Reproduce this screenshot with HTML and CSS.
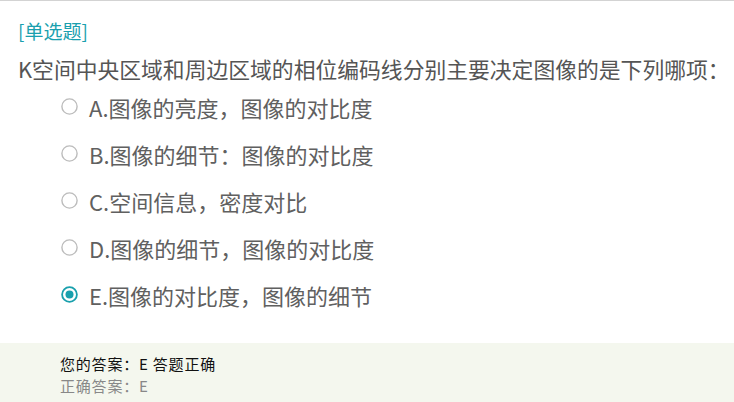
FILE: index.html
```html
<!DOCTYPE html>
<html lang="zh-CN">
<head>
<meta charset="utf-8">
<title>单选题</title>
<link rel="stylesheet" href="styles.css">
</head>
<body>
<div class="page">
  <div class="question">
    <div class="type">[单选题]</div>
    <div class="stem">K空间中央区域和周边区域的相位编码线分别主要决定图像的是下列哪项：</div>
    <ul class="options">
      <li class="option"><svg class="radio" viewBox="0 0 17 17" width="17" height="17"><circle cx="8.5" cy="8.5" r="7.6" fill="#fff" stroke="#bcbcbc" stroke-width="1.4"/></svg><span class="text">A.图像的亮度，图像的对比度</span></li>
      <li class="option"><svg class="radio" viewBox="0 0 17 17" width="17" height="17"><circle cx="8.5" cy="8.5" r="7.6" fill="#fff" stroke="#bcbcbc" stroke-width="1.4"/></svg><span class="text">B.图像的细节：图像的对比度</span></li>
      <li class="option"><svg class="radio" viewBox="0 0 17 17" width="17" height="17"><circle cx="8.5" cy="8.5" r="7.6" fill="#fff" stroke="#bcbcbc" stroke-width="1.4"/></svg><span class="text">C.空间信息，密度对比</span></li>
      <li class="option"><svg class="radio" viewBox="0 0 17 17" width="17" height="17"><circle cx="8.5" cy="8.5" r="7.6" fill="#fff" stroke="#bcbcbc" stroke-width="1.4"/></svg><span class="text">D.图像的细节，图像的对比度</span></li>
      <li class="option"><svg class="radio" viewBox="0 0 17 17" width="17" height="17"><circle cx="8.5" cy="8.5" r="7.4" fill="#fff" stroke="#19a0ad" stroke-width="1.8"/><circle cx="8.5" cy="8.5" r="4" fill="#19a0ad"/></svg><span class="text">E.图像的对比度，图像的细节</span></li>
    </ul>
  </div>
  <div class="answer">
    <div class="mine">您的答案：E 答题正确</div>
    <div class="right">正确答案：E</div>
  </div>
</div>
</body>
</html>
```
FILE: styles.css
```css
html, body {
  margin: 0;
  padding: 0;
  background: #ffffff;
}
body {
  font-family: "Microsoft YaHei", "Noto Sans CJK SC", sans-serif;
  width: 734px;
  height: 402px;
  overflow: hidden;
}
.page {
  border-top: 1px solid #d3d3d3;
  height: 401px;
  display: flex;
  flex-direction: column;
}
.question {
  padding: 18px 0 0 18px;
}
.type {
  font-size: 19px;
  line-height: 24px;
  color: #1a9fae;
}
.stem {
  margin-top: 12px;
  font-size: 21.8px;
  line-height: 28px;
  color: #555555;
  white-space: nowrap;
}
.options {
  list-style: none;
  margin: 0;
  padding: 0 0 0 43px;
}
.option {
  height: 47px;
  display: flex;
  align-items: center;
  gap: 11px;
}
.radio {
  display: block;
  width: 17px;
  height: 17px;
  flex: none;
}
.text {
  font-size: 22px;
  line-height: 28px;
  color: #606060;
}
.answer {
  margin-top: auto;
  background: #f4f7ee;
  height: 59px;
  box-sizing: border-box;
  padding: 10px 0 0 60px;
  font-size: 15px;
  line-height: 22px;
  letter-spacing: 0.8px;
}
.mine {
  color: #111111;
}
.right {
  color: #888888;
}
```
